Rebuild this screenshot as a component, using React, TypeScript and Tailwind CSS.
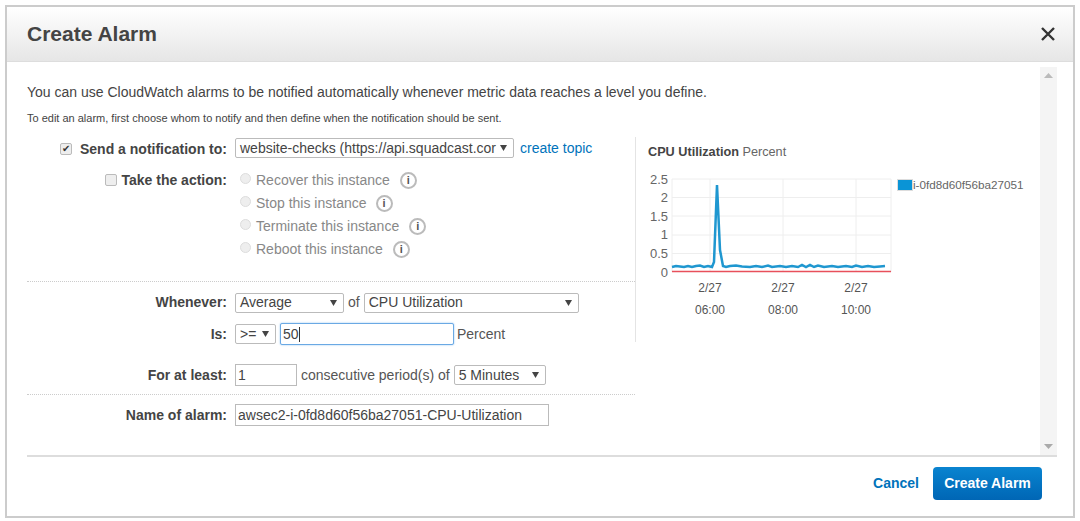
const font = { fontFamily: '"Liberation Sans", Arial, sans-serif' };

const series = [
  [672, 267], [676, 266], [680, 266.5], [684, 267], [688, 266], [692, 267], [696, 266], [700, 265.5], [704, 267],
  [708, 266], [712, 267], [714, 262], [717, 185], [720, 250], [723, 266], [726, 267], [730, 266], [736, 265.5],
  [742, 266.5], [750, 267], [756, 266], [762, 267], [768, 265.5], [772, 267], [780, 266], [786, 267], [792, 266],
  [798, 267], [802, 265], [806, 267], [810, 265], [814, 267], [818, 265.5], [824, 267], [832, 266], [838, 267],
  [846, 266], [852, 267], [856, 265.5], [862, 267], [868, 266], [874, 267], [880, 266.5], [885, 266],
];

const Select = ({ label, className }: { label: string; className: string }) => (
  <div className={`h-[20px] flex items-center justify-between pl-[4px] pr-[6px] bg-white border border-[#bbb] rounded-[2px] text-[14px] text-[#444] overflow-hidden whitespace-nowrap ${className}`}>
    <span>{label}</span>
    <svg width="7" height="6" viewBox="0 0 7 6" className="shrink-0"><path d="M0 0h7L3.5 6z" fill="#444" /></svg>
  </div>
);

const TextInput = ({ value, className }: { value: string; className: string }) => (
  <div className={`h-[22px] flex items-center pl-[2px] bg-white border border-[#bbb] text-[14px] text-[#444] whitespace-nowrap ${className}`}>
    {value}
  </div>
);

const Label = ({ children }: { children: string }) => (
  <span className="w-[200px] shrink-0 text-right font-bold text-[14px] text-[#444]">{children}</span>
);

const ActionOption = ({ label, infoGap }: { label: string; infoGap: string }) => (
  <div className="h-[23px] flex items-center text-[14px] text-[#888]">
    <span className="w-[11px] h-[11px] mb-[4px] rounded-full bg-[#eee] border border-[#ddd]" />
    <span className="ml-[5px]">{label}</span>
    <span className={`w-[17px] h-[17px] flex items-center justify-center rounded-full border-2 border-[#bbb] text-[11px] font-bold text-[#555] ${infoGap}`}>i</span>
  </div>
);

const Chart = () => (
  <div className="mt-[10px] flex text-[#666]">
    <svg width="247" height="154" viewBox="648 170 247 154" className="shrink-0">
      {[179, 197.5, 216, 235, 253.5].map((y) => (
        <line key={y} x1="672" x2="891" y1={y} y2={y} stroke="#eee" />
      ))}
      {[672, 710, 783, 856, 891].map((x) => (
        <line key={x} x1={x} x2={x} y1="179" y2="272" stroke="#eee" />
      ))}
      {[["2.5", 184], ["2", 202], ["1.5", 221], ["1", 239], ["0.5", 258], ["0", 277]].map(([t, y]) => (
        <text key={t} x="668" y={y} textAnchor="end" fontSize="13" fill="#666" fontFamily="Liberation Sans">{t}</text>
      ))}
      <line x1="672" x2="891" y1="271.5" y2="271.5" stroke="#e8505b" strokeWidth="1.5" />
      <polyline points={series.map((p) => p.join(",")).join(" ")} fill="none" stroke="#1f97d0" strokeWidth="2.5" />
      {[710, 783, 856].map((x) => (
        <g key={x} fontSize="12" fill="#555" fontFamily="Liberation Sans" textAnchor="middle">
          <text x={x} y="292">2/27</text>
          <text x={x} y="314">{x === 710 ? "06:00" : x === 783 ? "08:00" : "10:00"}</text>
        </g>
      ))}
    </svg>
    <div className="ml-[2px] mt-[9px] h-[12px] flex items-center text-[11.7px] whitespace-nowrap">
      <span className="w-[16px] h-[12px] bg-[#0a94d6] border border-[#ddd]" />
      <span>i-0fd8d60f56ba27051</span>
    </div>
  </div>
);

export default function App() {
  return (
    <div style={font} className="w-[1080px] h-[521px] bg-white pt-[5px] pb-[3px] px-[5px]">
      <div className="h-full flex flex-col border-2 border-[#ccc]">
        <div className="h-[55px] shrink-0 flex items-center justify-between pl-[20px] pr-[18px] pb-[1px] bg-gradient-to-b from-white to-[#e6e6e6] border-b border-[#ddd]">
          <h1 className="text-[21px] font-bold text-[#444]">Create Alarm</h1>
          <svg width="14" height="14" viewBox="0 0 14 14"><path d="M1 1l12 12M13 1L1 13" stroke="#333" strokeWidth="2.4" /></svg>
        </div>

        <div className="flex-1 min-h-0 flex flex-col pl-[20px] pr-[16px]">
          <div className="flex-1 min-h-0 flex">
            <div className="flex-1 min-w-0">
              <p className="mt-[21px] text-[14px] leading-[18px] text-[#444] whitespace-nowrap">
                You can use CloudWatch alarms to be notified automatically whenever metric data reaches a level you define.
              </p>
              <p className="mt-[11px] text-[11px] leading-[12px] text-[#444] whitespace-nowrap">
                To edit an alarm, first choose whom to notify and then define when the notification should be sent.
              </p>

              <div className="mt-[13px] flex">
                <div className="w-[608px] shrink-0">
                  <div className="pt-[1px] h-[32px] flex items-start gap-[8px]">
                    <div className="w-[200px] shrink-0 h-[20px] pt-[2px] flex items-center justify-end">
                      <span className="mr-[8px] w-[12px] h-[12px] flex items-center justify-center rounded-[2px] bg-[#eee] border border-[#bbb] text-[10px] leading-none text-[#333]">✔</span>
                      <span className="font-bold text-[14px] text-[#444]">Send a notification to:</span>
                    </div>
                    <Select label="website-checks (https://api.squadcast.cor" className="w-[279px]" />
                    <a className="-ml-[2px] text-[14px] leading-[20px] text-[#0073bb] whitespace-nowrap">create topic</a>
                  </div>

                  <div className="flex items-start gap-[9px]">
                    <div className="w-[200px] shrink-0 h-[23px] flex items-center justify-end">
                      <span className="mr-[4px] mb-[2px] w-[12px] h-[12px] rounded-[2px] bg-[#eee] border border-[#bbb]" />
                      <span className="font-bold text-[14px] text-[#444]">Take the action:</span>
                    </div>
                    <div className="pl-[4px]">
                      <ActionOption label="Recover this instance" infoGap="ml-[10px]" />
                      <ActionOption label="Stop this instance" infoGap="ml-[9px]" />
                      <ActionOption label="Terminate this instance" infoGap="ml-[10px]" />
                      <ActionOption label="Reboot this instance" infoGap="ml-[10px]" />
                    </div>
                  </div>

                  <div className="mt-[20px] border-t border-dotted border-[#ccc]" />

                  <div className="mt-[10px] flex items-center gap-[8px]">
                    <Label>Whenever:</Label>
                    <div className="flex items-center text-[14px] text-[#555]">
                      <Select label="Average" className="w-[109px]" />
                      <span className="mx-[4px]">of</span>
                      <Select label="CPU Utilization" className="w-[215px]" />
                    </div>
                  </div>
                  <div className="mt-[10px] flex items-center gap-[8px]">
                    <Label>Is:</Label>
                    <div className="flex items-center text-[14px] text-[#555]">
                      <Select label=">=" className="w-[41px]" />
                      <div className="ml-[4px] w-[174px] h-[22px] flex items-center pl-[2px] bg-white border border-[#6aa9e4] rounded-[2px] shadow-[0_0_2px_#8fc1f0] text-[#444]">
                        50<span className="w-px h-[15px] bg-[#333]" />
                      </div>
                      <span className="ml-[3px]">Percent</span>
                    </div>
                  </div>

                  <div className="mt-[19px] flex items-center gap-[8px]">
                    <Label>For at least:</Label>
                    <div className="flex items-center text-[14px] text-[#555]">
                      <TextInput value="1" className="w-[62px]" />
                      <span className="mx-[4px] whitespace-nowrap">consecutive period(s) of</span>
                      <Select label="5 Minutes" className="w-[92px]" />
                    </div>
                  </div>

                  <div className="mt-[8px] border-t border-dotted border-[#ccc]" />

                  <div className="mt-[9px] flex items-center gap-[8px]">
                    <Label>Name of alarm:</Label>
                    <TextInput value="awsec2-i-0fd8d60f56ba27051-CPU-Utilization" className="w-[314px]" />
                  </div>
                </div>

                <div className="h-[205px] pl-[12px] border-l border-[#e4e4e4]">
                  <div className="mt-[7px] text-[12.7px] leading-[16px] whitespace-nowrap">
                    <span className="font-bold text-[#444]">CPU Utilization</span>{" "}
                    <span className="text-[#666]">Percent</span>
                  </div>
                  <Chart />
                </div>
              </div>
            </div>

            <div className="mt-[5px] w-[17px] shrink-0 flex flex-col items-center justify-between py-[6px] bg-[#f4f4f4]">
              <svg width="9" height="5" viewBox="0 0 9 5"><path d="M4.5 0L9 5H0z" fill="#bbb" /></svg>
              <svg width="9" height="5" viewBox="0 0 9 5"><path d="M0 0h9L4.5 5z" fill="#aaa" /></svg>
            </div>
          </div>

          <div className="h-[61px] shrink-0 flex items-start justify-end gap-[14px] pt-[10px] pr-[15px] border-t-2 border-[#ddd]">
            <a className="text-[14px] leading-[33px] font-bold text-[#0073bb]">Cancel</a>
            <button className="w-[109px] h-[33px] rounded-[4px] bg-gradient-to-b from-[#0a84d0] to-[#0066b5] text-[14px] font-bold text-white">Create Alarm</button>
          </div>
        </div>
      </div>
    </div>
  );
}
